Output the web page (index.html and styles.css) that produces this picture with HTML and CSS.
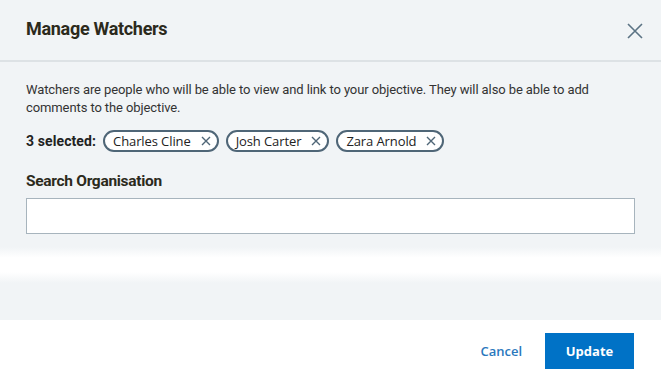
FILE: index.html
```html
<!DOCTYPE html>
<html lang="en">
<head>
    <meta charset="UTF-8">
    <title>Manage Watchers</title>
    <link rel="stylesheet" href="styles.css">
</head>
<body>
<div class="modal">
    <div class="modal-header">
        <h1>Manage Watchers</h1>
        <button class="close" aria-label="Close">
            <svg width="16" height="16" viewBox="0 0 16 16"><path d="M1 1L15 15M15 1L1 15" stroke="#5b7384" stroke-width="1.6" fill="none"/></svg>
        </button>
    </div>
    <div class="modal-body">
        <p class="intro">Watchers are people who will be able to view and link to your objective. They will also be able to add comments to the objective.</p>
        <div class="selected">
            <span class="count">3 selected:</span>
            <span class="chip">Charles Cline <svg class="x" width="10" height="10" viewBox="0 0 10 10"><path d="M1 1L9 9M9 1L1 9" stroke="#4f6677" stroke-width="1.4" fill="none"/></svg></span>
            <span class="chip">Josh Carter <svg class="x" width="10" height="10" viewBox="0 0 10 10"><path d="M1 1L9 9M9 1L1 9" stroke="#4f6677" stroke-width="1.4" fill="none"/></svg></span>
            <span class="chip">Zara Arnold <svg class="x" width="10" height="10" viewBox="0 0 10 10"><path d="M1 1L9 9M9 1L1 9" stroke="#4f6677" stroke-width="1.4" fill="none"/></svg></span>
        </div>
        <label for="search">Search Organisation</label>
        <input type="text" id="search">
        <div class="fade"></div>
    </div>
    <div class="modal-footer">
        <button class="cancel">Cancel</button>
        <button class="update">Update</button>
    </div>
</div>
</body>
</html>
```

FILE: styles.css
```css
body { margin: 0; font-family: "Open Sans", Arial, sans-serif; background: #fff; color: #333; }
.modal { width: 661px; height: 382px; display: flex; flex-direction: column; }
.modal-header { background: #f1f4f6; border-bottom: 2px solid #dde2e5; display: flex; align-items: center; justify-content: space-between; padding: 0 26px; box-sizing: border-box; height: 62px; }
h1 { margin: 0; font-family: Roboto, Arial, sans-serif; font-size: 18px; font-weight: 700; color: #2c2a1c; letter-spacing: -0.3px; margin-top: -3px; }
.close { background: none; border: none; padding: 0; margin-right: -8px; margin-top: 1px; cursor: pointer; display: flex; }
.modal-body { background: #f1f4f6; padding: 19px 26px 0; height: 230px; box-sizing: border-box; }
.intro { margin: 0; font-family: Roboto, Arial, sans-serif; font-size: 13px; line-height: 18px; color: #333; letter-spacing: -0.1px; }
.selected { display: flex; align-items: center; gap: 7px; margin-top: 13px; }
.count { font-family: Roboto, Arial, sans-serif; font-weight: 700; font-size: 14px; color: #222; letter-spacing: 0.1px; }
.chip { border: 2px solid #4f6677; border-radius: 11px; height: 22px; box-sizing: border-box; padding: 0 6px 0 8px; font-size: 13px; line-height: 17px; color: #222; background: #fff; display: flex; align-items: center; gap: 10px; letter-spacing: -0.1px; }
.chip .x { display: block; }
label { display: block; margin-top: 20px; font-family: Roboto, Arial, sans-serif; font-weight: 700; font-size: 15.5px; color: #2c2a1c; letter-spacing: -0.3px; }
input { display: block; width: 100%; height: 36px; box-sizing: border-box; margin-top: 8px; border: 1px solid #a7b4bd; background: #fff; }
.fade { height: 36px; margin: 13px -26px 0; background: linear-gradient(#f1f4f6, #fff 30%, #fff 70%, #f1f4f6); }
.modal-footer { flex: 1; border-top: 28px solid #f1f4f6; display: flex; justify-content: flex-end; align-items: center; padding: 0 27px; gap: 17px; }
.cancel { background: none; border: none; color: #2a78bd; font-family: "Open Sans", Arial, sans-serif; font-weight: 600; font-size: 13px; cursor: pointer; }
.update { background: #0072c6; color: #fff; border: none; width: 89px; height: 36px; font-family: "Open Sans", Arial, sans-serif; font-weight: 700; font-size: 13px; cursor: pointer; }
```
